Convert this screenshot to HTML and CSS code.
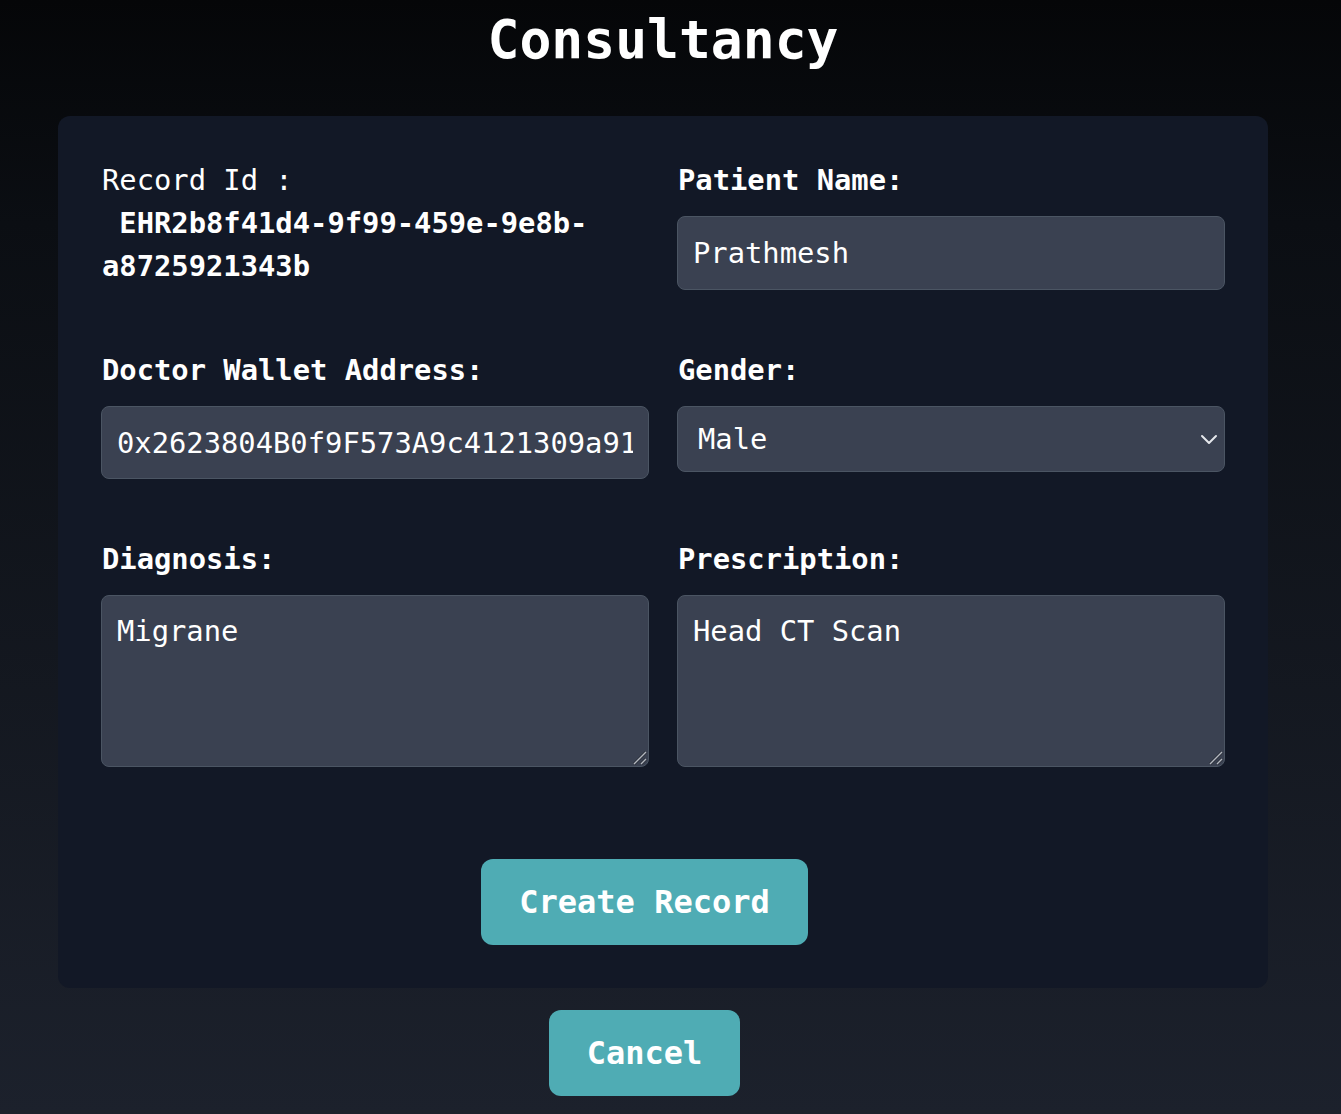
FILE: index.html
```html
<!DOCTYPE html>
<html lang="en">
<head>
<meta charset="utf-8">
<title>Consultancy</title>
<link rel="stylesheet" href="styles.css">
</head>
<body>
<div class="page">
  <h1 class="title">Consultancy</h1>
  <form class="card">
    <div class="grid">
      <div class="field">
        <p class="record">Record Id :<br><strong class="record-id">&nbsp;EHR2b8f41d4-9f99-459e-9e8b-a8725921343b</strong></p>
      </div>
      <div class="field">
        <label class="label" for="pname">Patient Name:</label>
        <input class="input" id="pname" type="text" value="Prathmesh">
      </div>
      <div class="field">
        <label class="label" for="wallet">Doctor Wallet Address:</label>
        <input class="input input-short" id="wallet" type="text" value="0x2623804B0f9F573A9c4121309a91c5E2d1b7a3">
      </div>
      <div class="field">
        <label class="label" for="gender">Gender:</label>
        <div class="select-wrap">
          <select class="select" id="gender">
            <option>Male</option>
            <option>Female</option>
            <option>Other</option>
          </select>
          <svg class="chevron" width="18" height="12" viewBox="0 0 18 12" aria-hidden="true"><path d="M2 3 L9 10 L16 3" fill="none" stroke="#e5e7eb" stroke-width="2" stroke-linecap="round" stroke-linejoin="round"/></svg>
        </div>
      </div>
      <div class="field">
        <label class="label" for="diag">Diagnosis:</label>
        <div class="area-wrap">
          <textarea class="textarea" id="diag">Migrane</textarea>
          <svg class="resizer" width="16" height="16" viewBox="0 0 16 16" aria-hidden="true"><path d="M3 15 L15 3 M10 15 L15 10" fill="none" stroke="#2a2f3a" stroke-width="3"/><path d="M3 15 L15 3 M10 15 L15 10" fill="none" stroke="#b4b8c0" stroke-width="1.4"/></svg>
        </div>
      </div>
      <div class="field">
        <label class="label" for="presc">Prescription:</label>
        <div class="area-wrap">
          <textarea class="textarea" id="presc">Head CT Scan</textarea>
          <svg class="resizer" width="16" height="16" viewBox="0 0 16 16" aria-hidden="true"><path d="M3 15 L15 3 M10 15 L15 10" fill="none" stroke="#2a2f3a" stroke-width="3"/><path d="M3 15 L15 3 M10 15 L15 10" fill="none" stroke="#b4b8c0" stroke-width="1.4"/></svg>
        </div>
      </div>
    </div>
    <button class="btn" type="button">Create Record</button>
  </form>
  <button class="btn cancel" type="button">Cancel</button>
</div>
</body>
</html>
```
FILE: styles.css
```css
html, body {
  margin: 0;
  padding: 0;
}
body {
  min-height: 1114px;
  background: linear-gradient(180deg, #050608 0%, #0b0e13 20%, #1c212c 100%);
  font-family: "DejaVu Sans Mono", "Liberation Mono", monospace;
  color: #ffffff;
}
.page {
  width: 1326px;
  display: flex;
  flex-direction: column;
  align-items: center;
}
.title {
  margin: 9px 0 45px;
  font-size: 53px;
  line-height: 62px;
  font-weight: 700;
  color: #ffffff;
}
.card {
  box-sizing: border-box;
  width: 1210px;
  background: #121826;
  border-radius: 12px;
  padding: 42px 43px 43px 43px;
  display: flex;
  flex-direction: column;
  align-items: center;
}
.grid {
  width: 100%;
  display: grid;
  grid-template-columns: 1fr 1fr;
  column-gap: 28px;
  row-gap: 58px;
  margin-bottom: 92px;
}
.field {
  display: flex;
  flex-direction: column;
  min-width: 0;
}
.record {
  margin: 0;
  padding: 1px 0 0 1px;
  font-size: 28.8px;
  line-height: 43px;
  font-weight: 400;
}
.record-id {
  font-weight: 700;
}
.label {
  font-size: 28.8px;
  line-height: 43px;
  font-weight: 700;
  padding: 1px 0 0 1px;
  margin-bottom: 14px;
}
.input, .select, .textarea {
  box-sizing: border-box;
  width: 100%;
  font-family: "DejaVu Sans Mono", "Liberation Mono", monospace;
  font-size: 28.8px;
  color: #ffffff;
  background: #3a4151;
  border: 1px solid #4b5563;
  border-radius: 8px;
  outline: none;
  margin: 0;
}
.input {
  height: 74px;
  padding: 0 15px;
}
.input-short {
  height: 73px;
}
.select-wrap, .area-wrap {
  position: relative;
}
.select {
  appearance: none;
  -webkit-appearance: none;
  height: 66px;
  padding: 0 40px 0 20px;
}
.chevron {
  position: absolute;
  right: 7px;
  top: 27px;
  pointer-events: none;
}
.textarea {
  display: block;
  height: 172px;
  padding: 14px 15px;
  line-height: 43px;
  resize: none;
}
.resizer {
  position: absolute;
  right: 2px;
  bottom: 2px;
  pointer-events: none;
}
.btn {
  box-sizing: border-box;
  height: 86px;
  padding: 0 38px;
  margin: 0 37px 0 0;
  border: none;
  border-radius: 12px;
  background: #4facb4;
  color: #ffffff;
  font-family: "DejaVu Sans Mono", "Liberation Mono", monospace;
  font-size: 32px;
  font-weight: 700;
  cursor: pointer;
}
.cancel {
  margin-top: 22px;
}
```
